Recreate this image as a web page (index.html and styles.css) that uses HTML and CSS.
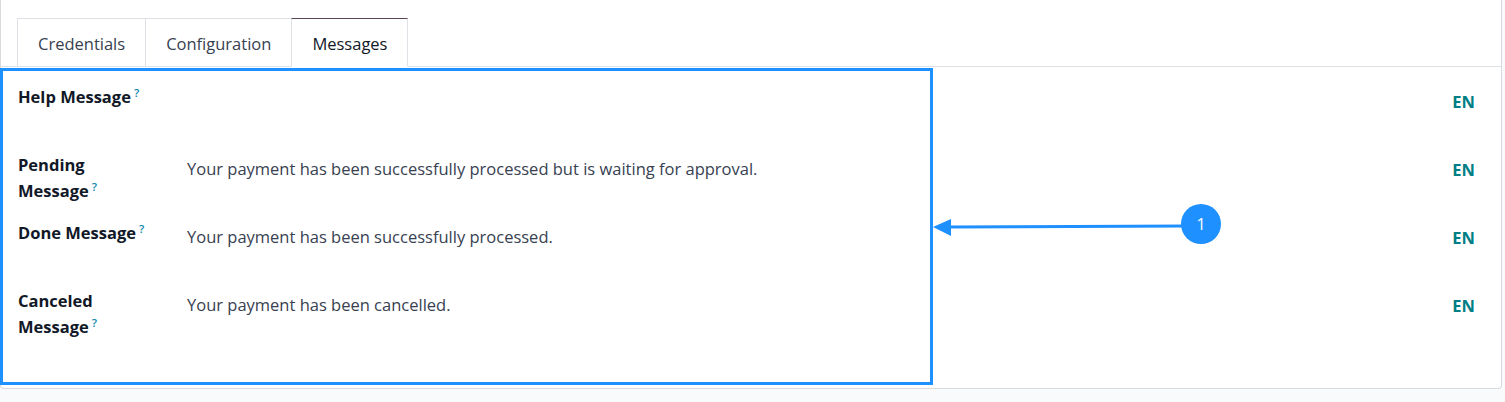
FILE: index.html
```html
<!DOCTYPE html>
<html>
<head>
<meta charset="utf-8">
<link rel="stylesheet" href="styles.css">
</head>
<body>
<div class="card">
  <div class="tabs">
    <div class="tab">Credentials</div>
    <div class="tab">Configuration</div>
    <div class="tab active">Messages</div>
  </div>
  <div class="form">
    <div class="row">
      <div class="label">Help Message<sup class="help">?</sup></div>
      <div class="value"></div>
      <div class="lang">EN</div>
    </div>
    <div class="row">
      <div class="label">Pending Message<sup class="help">?</sup></div>
      <div class="value">Your payment has been successfully processed but is waiting for approval.</div>
      <div class="lang">EN</div>
    </div>
    <div class="row">
      <div class="label">Done Message<sup class="help">?</sup></div>
      <div class="value">Your payment has been successfully processed.</div>
      <div class="lang">EN</div>
    </div>
    <div class="row">
      <div class="label">Canceled Message<sup class="help">?</sup></div>
      <div class="value">Your payment has been cancelled.</div>
      <div class="lang">EN</div>
    </div>
  </div>
</div>
<div class="annot-box"></div>
<svg class="annot-arrow" width="1505" height="402" viewBox="0 0 1505 402">
  <line x1="948" y1="227" x2="1185" y2="226" stroke="#1e90ff" stroke-width="3"/>
  <polygon points="933,227 951,219 951,236" fill="#1e90ff"/>
  <circle cx="1201" cy="224" r="20" fill="#1e90ff"/>
  <text x="1201" y="230" text-anchor="middle" class="annot-num">1</text>
</svg>
</body>
</html>
```
FILE: styles.css
```css
html, body {
  margin: 0;
  padding: 0;
}
body {
  background: #f9fafb;
  width: 1505px;
  height: 402px;
  overflow: hidden;
  position: relative;
  font-family: "Open Sans", "Noto Sans", sans-serif;
  font-size: 16.5px;
  color: #374151;
}
.card {
  box-sizing: border-box;
  width: 1502px;
  height: 389px;
  background: #fff;
  border: 1px solid #d8dadd;
  border-top: none;
  border-radius: 0 0 4px 4px;
  padding-top: 18px;
}
.tabs {
  display: flex;
  padding-left: 16px;
  border-bottom: 1px solid #dee2e6;
  height: 48px;
}
.tab {
  box-sizing: border-box;
  height: 49px;
  margin-bottom: -1px;
  padding: 0 20px;
  line-height: 49px;
  border: 1px solid #dee2e6;
  border-bottom: 1px solid #dee2e6;
  background: #fff;
  color: #374151;
}
.tab + .tab {
  margin-left: -1px;
}
.tab.active {
  border-top-color: #5a4657;
  border-bottom-color: #fff;
  color: #111827;
}
.form {
  padding: 17px 26px 32px 17px;
}
.row {
  display: flex;
  min-height: 68px;
}
.label {
  box-sizing: border-box;
  width: 169px;
  flex: none;
  padding-right: 36px;
  font-weight: 700;
  line-height: 26px;
  color: #111827;
}
.help {
  font-size: 11.5px;
  line-height: 0;
  margin-left: 3px;
  color: #0a86b0;
  font-weight: 600;
}
.value {
  flex: 1;
  padding-top: 4px;
  line-height: 26px;
}
.lang {
  flex: none;
  padding-top: 5px;
  line-height: 26px;
  font-weight: 700;
  color: #017e84;
}
.annot-box {
  position: absolute;
  left: 0;
  top: 68px;
  width: 927px;
  height: 311px;
  border: 3px solid #1e90ff;
}
.annot-arrow {
  position: absolute;
  left: 0;
  top: 0;
  pointer-events: none;
}
.annot-num {
  fill: #fff;
  font-family: "Open Sans", sans-serif;
  font-size: 16px;
}
```
